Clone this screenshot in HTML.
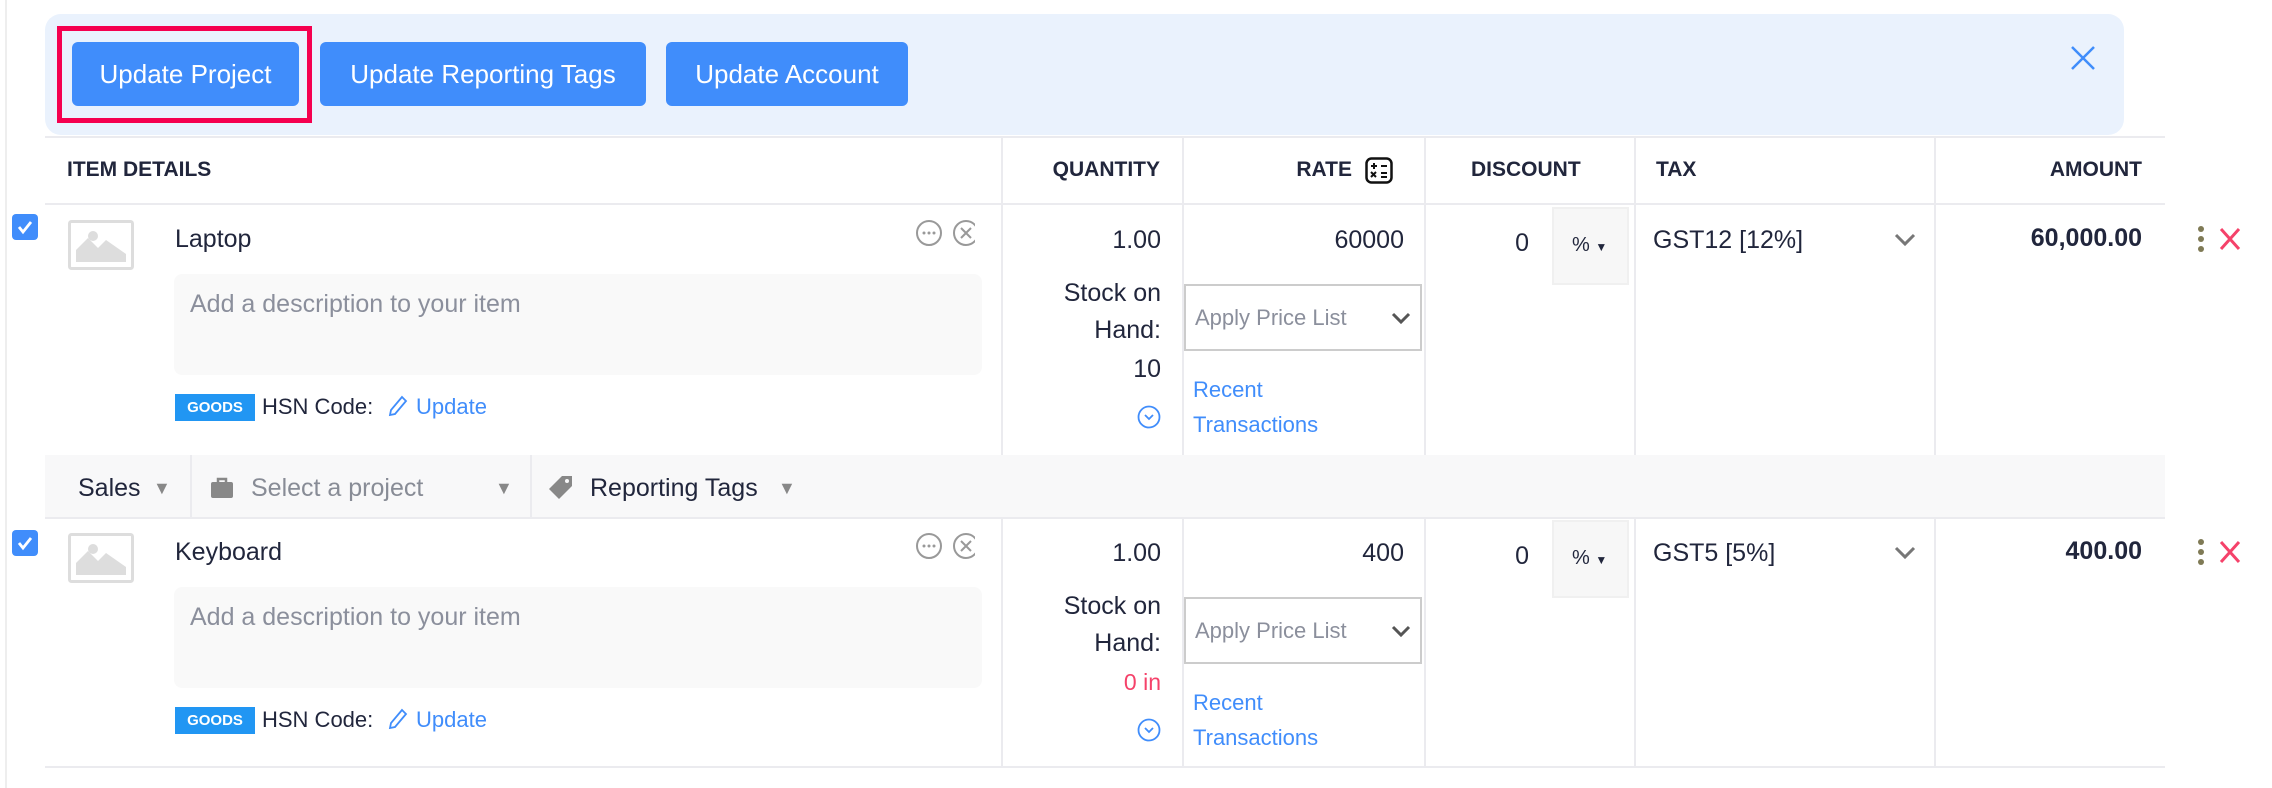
<!DOCTYPE html>
<html><head><meta charset="utf-8"><style>
*{margin:0;padding:0;box-sizing:border-box}
body{width:2272px;height:788px;background:#fff;position:relative;overflow:hidden;font-family:"Liberation Sans",sans-serif;color:#21263c;font-size:25px}
.a{position:absolute;white-space:nowrap;line-height:30px}
.r{text-align:right}
.btn{position:absolute;top:42px;height:64px;background:#408dfb;color:#fff;border-radius:6px;font-size:26px;line-height:64px;text-align:center}
.vl{position:absolute;width:2px;background:#ebebef}
.hl{position:absolute;height:2px;background:#ebebef}
.hd{font-weight:bold;font-size:21px;color:#21263c}
.blue{color:#408dfb}
.gray{color:#8b8f9c}
.row{position:absolute;left:0;width:2272px;height:788px}
</style></head><body>
<div style="position:absolute;left:5px;top:0;width:2px;height:788px;background:#eee"></div>
<div style="position:absolute;left:45px;top:14px;width:2079px;height:121px;background:#eaf2fd;border-radius:16px"></div>
<div style="position:absolute;left:57px;top:26px;width:255px;height:97px;border:5px solid #f5004f"></div>
<div class="btn" style="left:72px;width:227px">Update Project</div>
<div class="btn" style="left:320px;width:326px">Update Reporting Tags</div>
<div class="btn" style="left:666px;width:242px">Update Account</div>
<svg style="position:absolute;left:2070px;top:45px" width="26" height="26" viewBox="0 0 26 26"><path d="M2 2L24 24M24 2L2 24" stroke="#408dfb" stroke-width="2.5"/></svg>

<div class="hl" style="left:45px;top:136px;width:2120px"></div>
<div class="hl" style="left:45px;top:203px;width:2120px"></div>
<div class="hl" style="left:45px;top:517px;width:2120px"></div>
<div class="hl" style="left:45px;top:766px;width:2120px"></div>
<div style="position:absolute;left:45px;top:455px;width:2120px;height:62px;background:#f8f8f9"></div>
<div class="vl" style="left:190px;top:455px;height:62px"></div>
<div class="vl" style="left:530px;top:455px;height:62px"></div>
<div class="vl" style="left:1001px;top:137px;height:318px"></div>
<div class="vl" style="left:1182px;top:137px;height:318px"></div>
<div class="vl" style="left:1424px;top:137px;height:318px"></div>
<div class="vl" style="left:1634px;top:137px;height:318px"></div>
<div class="vl" style="left:1934px;top:137px;height:318px"></div>
<div class="vl" style="left:1001px;top:519px;height:248px"></div>
<div class="vl" style="left:1182px;top:519px;height:248px"></div>
<div class="vl" style="left:1424px;top:519px;height:248px"></div>
<div class="vl" style="left:1634px;top:519px;height:248px"></div>
<div class="vl" style="left:1934px;top:519px;height:248px"></div>

<div class="a hd" style="left:67px;top:155px">ITEM DETAILS</div>
<div class="a hd r" style="right:1112px;top:155px">QUANTITY</div>
<div class="a hd r" style="right:920px;top:155px">RATE</div>
<svg style="position:absolute;left:1365px;top:157px" width="28" height="27" viewBox="0 0 28 27"><rect x="1.5" y="1.5" width="25" height="24" rx="5" fill="none" stroke="#111" stroke-width="2.5"/><path d="M6 9h6M9 6v6M16 9h6M6 15l5 5M11 15l-5 5M16 16h6M16 20h6" stroke="#111" stroke-width="2"/></svg>
<div class="a hd" style="left:1471px;top:155px">DISCOUNT</div>
<div class="a hd" style="left:1656px;top:155px">TAX</div>
<div class="a hd r" style="right:130px;top:155px">AMOUNT</div>

<div class="a" style="left:78px;top:473px">Sales</div>
<div class="a" style="left:153px;top:473px;font-size:18px;color:#888">▼</div>
<svg style="position:absolute;left:210px;top:477px" width="24" height="22" viewBox="0 0 24 22"><rect x="1" y="5" width="22" height="16" rx="2" fill="#888"/><path d="M8 5V2h8v3" stroke="#888" stroke-width="2.5" fill="none"/></svg>
<div class="a" style="left:251px;top:473px;color:#888c96">Select a project</div>
<div class="a" style="left:495px;top:473px;font-size:18px;color:#888">▼</div>
<svg style="position:absolute;left:548px;top:475px" width="26" height="26" viewBox="0 0 26 26"><path d="M14 1h10v10L11 24 1 14z" fill="#888"/><circle cx="19" cy="6" r="2" fill="#f8f8f9"/></svg>
<div class="a" style="left:590px;top:473px">Reporting Tags</div>
<div class="a" style="left:778px;top:473px;font-size:18px;color:#888">▼</div>

<!-- ROW 1 -->
<div class="row" style="top:0">
<div style="position:absolute;left:12px;top:214px;width:26px;height:26px;background:#408dfb;border-radius:4px"><svg width="26" height="26" viewBox="0 0 26 26"><path d="M7 13l4 5 8-10" stroke="#fff" stroke-width="2.8" fill="none"/></svg></div>
<svg style="position:absolute;left:68px;top:220px" width="66" height="50" viewBox="0 0 66 50"><rect x="1.5" y="1.5" width="63" height="47" rx="2" fill="#fff" stroke="#ddd" stroke-width="3"/><path d="M8 42V30l12-12 10 10 8-8 20 14v8z" fill="#ddd"/><circle cx="25" cy="16" r="5" fill="#ddd"/></svg>
<div class="a" style="left:175px;top:224px">Laptop</div>
<svg style="position:absolute;left:915px;top:219px" width="60" height="28" viewBox="0 0 60 28"><circle cx="14" cy="14" r="12" fill="none" stroke="#999" stroke-width="2"/><circle cx="9" cy="14" r="1.5" fill="#999"/><circle cx="14" cy="14" r="1.5" fill="#999"/><circle cx="19" cy="14" r="1.5" fill="#999"/><circle cx="51" cy="14" r="12" fill="none" stroke="#999" stroke-width="2"/><path d="M46 9l10 10M56 9l-10 10" stroke="#999" stroke-width="2"/></svg>
<div style="position:absolute;left:174px;top:274px;width:808px;height:101px;background:#f9f9f9;border-radius:8px"></div>
<div class="a gray" style="left:190px;top:289px">Add a description to your item</div>
<div style="position:absolute;left:175px;top:394px;width:80px;height:27px;background:#2196f3;color:#fff;font-size:15px;font-weight:bold;text-align:center;line-height:27px">GOODS</div>
<div class="a" style="left:262px;top:392px;font-size:22px">HSN Code:</div>
<svg style="position:absolute;left:388px;top:395px" width="20" height="22" viewBox="0 0 20 22"><path d="M14 2l4 4L7 19l-5 1 1-5z" fill="none" stroke="#408dfb" stroke-width="1.8"/></svg>
<div class="a blue" style="left:416px;top:392px;font-size:22px">Update</div>
<div class="a r" style="right:1111px;top:225px">1.00</div>
<div class="a r" style="right:1111px;top:278px">Stock on</div>
<div class="a r" style="right:1111px;top:315px">Hand:</div>
<div class="a r" style="right:1111px;top:354px">10</div>
<svg style="position:absolute;left:1137px;top:405px" width="24" height="24" viewBox="0 0 24 24"><circle cx="12" cy="12" r="10.5" fill="none" stroke="#408dfb" stroke-width="1.8"/><path d="M8 10l4 4 4-4" stroke="#408dfb" stroke-width="1.8" fill="none"/></svg>
<div class="a r" style="right:868px;top:225px">60000</div>
<div style="position:absolute;left:1184px;top:284px;width:238px;height:67px;border:2px solid #ccc"></div>
<div class="a gray" style="left:1195px;top:303px;font-size:22px">Apply Price List</div>
<svg style="position:absolute;left:1391px;top:312px" width="20" height="14" viewBox="0 0 20 14"><path d="M2 2l8 8 8-8" stroke="#555" stroke-width="3" fill="none"/></svg>
<div class="a blue" style="left:1193px;top:375px;font-size:22px">Recent</div>
<div class="a blue" style="left:1193px;top:410px;font-size:22px">Transactions</div>
<div class="a r" style="right:743px;top:228px">0</div>
<div style="position:absolute;left:1552px;top:207px;width:77px;height:78px;background:#f7f7f7;border:2px solid #f0f0f0"></div>
<div class="a" style="left:1572px;top:230px;font-size:20px">% <span style="font-size:12px">▼</span></div>
<div class="a" style="left:1653px;top:225px">GST12 [12%]</div>
<svg style="position:absolute;left:1894px;top:233px" width="22" height="14" viewBox="0 0 22 14"><path d="M2 2l9 9 9-9" stroke="#777" stroke-width="3" fill="none"/></svg>
<div class="a r" style="right:130px;top:223px;font-weight:bold">60,000.00</div>
<svg style="position:absolute;left:2197px;top:225px" width="8" height="28" viewBox="0 0 8 28"><circle cx="4" cy="4" r="3" fill="#7f7a55"/><circle cx="4" cy="14" r="3" fill="#7f7a55"/><circle cx="4" cy="24" r="3" fill="#7f7a55"/></svg>
<svg style="position:absolute;left:2219px;top:227px" width="22" height="24" viewBox="0 0 22 24"><path d="M2 2l18 20M20 2L2 22" stroke="#f5426a" stroke-width="3"/></svg>
</div>
<!-- ROW 2 -->
<div class="row" style="top:313px;height:475px;overflow:hidden">
<div style="position:absolute;left:12px;top:217px;width:26px;height:26px;background:#408dfb;border-radius:4px"><svg width="26" height="26" viewBox="0 0 26 26"><path d="M7 13l4 5 8-10" stroke="#fff" stroke-width="2.8" fill="none"/></svg></div>
<svg style="position:absolute;left:68px;top:220px" width="66" height="50" viewBox="0 0 66 50"><rect x="1.5" y="1.5" width="63" height="47" rx="2" fill="#fff" stroke="#ddd" stroke-width="3"/><path d="M8 42V30l12-12 10 10 8-8 20 14v8z" fill="#ddd"/><circle cx="25" cy="16" r="5" fill="#ddd"/></svg>
<div class="a" style="left:175px;top:224px">Keyboard</div>
<svg style="position:absolute;left:915px;top:219px" width="60" height="28" viewBox="0 0 60 28"><circle cx="14" cy="14" r="12" fill="none" stroke="#999" stroke-width="2"/><circle cx="9" cy="14" r="1.5" fill="#999"/><circle cx="14" cy="14" r="1.5" fill="#999"/><circle cx="19" cy="14" r="1.5" fill="#999"/><circle cx="51" cy="14" r="12" fill="none" stroke="#999" stroke-width="2"/><path d="M46 9l10 10M56 9l-10 10" stroke="#999" stroke-width="2"/></svg>
<div style="position:absolute;left:174px;top:274px;width:808px;height:101px;background:#f9f9f9;border-radius:8px"></div>
<div class="a gray" style="left:190px;top:289px">Add a description to your item</div>
<div style="position:absolute;left:175px;top:394px;width:80px;height:27px;background:#2196f3;color:#fff;font-size:15px;font-weight:bold;text-align:center;line-height:27px">GOODS</div>
<div class="a" style="left:262px;top:392px;font-size:22px">HSN Code:</div>
<svg style="position:absolute;left:388px;top:395px" width="20" height="22" viewBox="0 0 20 22"><path d="M14 2l4 4L7 19l-5 1 1-5z" fill="none" stroke="#408dfb" stroke-width="1.8"/></svg>
<div class="a blue" style="left:416px;top:392px;font-size:22px">Update</div>
<div class="a r" style="right:1111px;top:225px">1.00</div>
<div class="a r" style="right:1111px;top:278px">Stock on</div>
<div class="a r" style="right:1111px;top:315px">Hand:</div>
<div class="a r" style="right:1111px;top:354px;color:#f5426a;font-size:23px">0 in</div>
<svg style="position:absolute;left:1137px;top:405px" width="24" height="24" viewBox="0 0 24 24"><circle cx="12" cy="12" r="10.5" fill="none" stroke="#408dfb" stroke-width="1.8"/><path d="M8 10l4 4 4-4" stroke="#408dfb" stroke-width="1.8" fill="none"/></svg>
<div class="a r" style="right:868px;top:225px">400</div>
<div style="position:absolute;left:1184px;top:284px;width:238px;height:67px;border:2px solid #ccc"></div>
<div class="a gray" style="left:1195px;top:303px;font-size:22px">Apply Price List</div>
<svg style="position:absolute;left:1391px;top:312px" width="20" height="14" viewBox="0 0 20 14"><path d="M2 2l8 8 8-8" stroke="#555" stroke-width="3" fill="none"/></svg>
<div class="a blue" style="left:1193px;top:375px;font-size:22px">Recent</div>
<div class="a blue" style="left:1193px;top:410px;font-size:22px">Transactions</div>
<div class="a r" style="right:743px;top:228px">0</div>
<div style="position:absolute;left:1552px;top:207px;width:77px;height:78px;background:#f7f7f7;border:2px solid #f0f0f0"></div>
<div class="a" style="left:1572px;top:230px;font-size:20px">% <span style="font-size:12px">▼</span></div>
<div class="a" style="left:1653px;top:225px">GST5 [5%]</div>
<svg style="position:absolute;left:1894px;top:233px" width="22" height="14" viewBox="0 0 22 14"><path d="M2 2l9 9 9-9" stroke="#777" stroke-width="3" fill="none"/></svg>
<div class="a r" style="right:130px;top:223px;font-weight:bold">400.00</div>
<svg style="position:absolute;left:2197px;top:225px" width="8" height="28" viewBox="0 0 8 28"><circle cx="4" cy="4" r="3" fill="#7f7a55"/><circle cx="4" cy="14" r="3" fill="#7f7a55"/><circle cx="4" cy="24" r="3" fill="#7f7a55"/></svg>
<svg style="position:absolute;left:2219px;top:227px" width="22" height="24" viewBox="0 0 22 24"><path d="M2 2l18 20M20 2L2 22" stroke="#f5426a" stroke-width="3"/></svg>
</div>
</body></html>
